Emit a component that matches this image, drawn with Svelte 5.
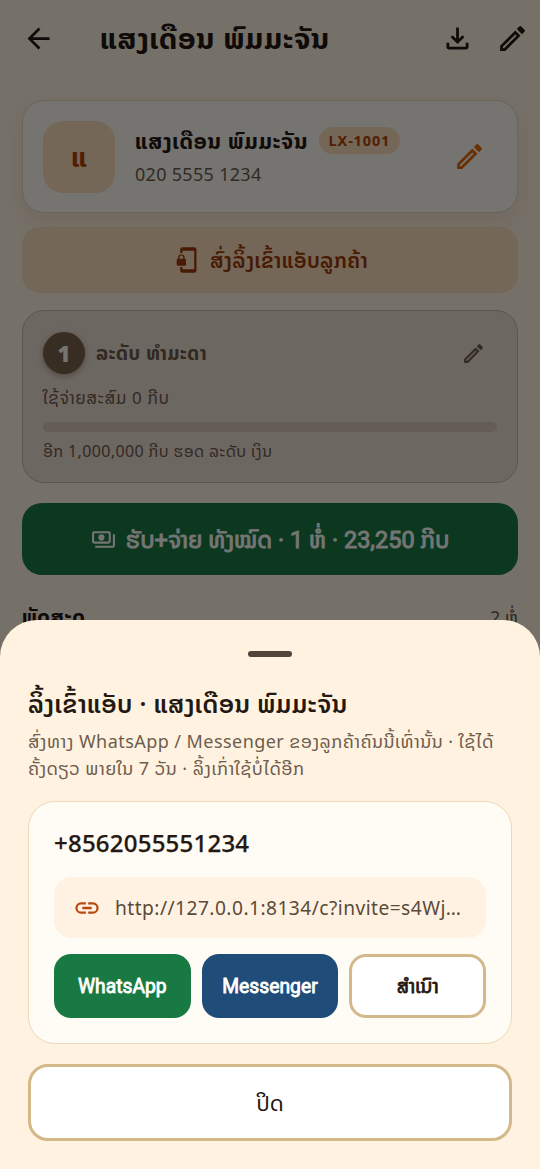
<script lang="ts">
	const customer = { name: 'ແສງເດືອນ ພົມມະຈັນ', initial: 'ແ', code: 'LX-1001', phone: '020 5555 1234' };
	const invite = { phone: '+8562055551234', url: 'http://127.0.0.1:8134/c?invite=s4Wj…' };

	let open = $state(true);
</script>

{#snippet pencil(size: number)}
	<svg width={size} height={size} viewBox="0 0 24 24" fill="currentColor">
		<path
			d="M3 17.25V21h3.75L17.81 9.94l-3.75-3.75L3 17.25zM5.92 19H5v-.92l9.06-9.06.92.92L5.92 19zM20.71 5.63l-2.34-2.34a1 1 0 0 0-1.41 0l-1.83 1.83 3.75 3.75 1.83-1.83a1 1 0 0 0 0-1.41z"
		/>
	</svg>
{/snippet}

<div class="screen">
	<header>
		<button class="icon back" aria-label="ກັບຄືນ">
			<svg width="33" height="33" viewBox="0 0 24 24" fill="currentColor">
				<path d="M20 11H7.83l5.59-5.59L12 4l-8 8 8 8 1.41-1.41L7.83 13H20v-2z" />
			</svg>
		</button>
		<h1>{customer.name}</h1>
		<button class="icon" aria-label="ດາວໂຫຼດ">
			<svg width="33" height="33" viewBox="0 0 24 24" fill="currentColor">
				<path
					d="M12 16l-5-5 1.4-1.45 2.6 2.6V4h2v8.15l2.6-2.6L17 11l-5 5zm-6 4a2 2 0 0 1-2-2v-3h2v3h12v-3h2v3a2 2 0 0 1-2 2H6z"
				/>
			</svg>
		</button>
		<button class="icon edit" aria-label="ແກ້ໄຂ">{@render pencil(33)}</button>
	</header>

	<main>
		<section class="customer">
			<div class="avatar">{customer.initial}</div>
			<div class="who">
				<div class="name-row">
					<span class="name">{customer.name}</span>
					<span class="code">{customer.code}</span>
				</div>
				<div class="phone">{customer.phone}</div>
			</div>
			<button class="icon accent" aria-label="ແກ້ໄຂ">{@render pencil(33)}</button>
		</section>

		<button class="send-link">
			<svg width="28" height="28" viewBox="0 0 24 24" fill="currentColor">
				<path
					d="M19 1H9a2 2 0 0 0-2 2v3h2V4h10v16H9v-2H7v3a2 2 0 0 0 2 2h10a2 2 0 0 0 2-2V3a2 2 0 0 0-2-2zM10.800 11V9.500C10.800 8.100 9.400 7 8 7S5.200 8.100 5.200 9.500V11c-.6 0-1.200.6-1.200 1.200v3.500c0 .7.6 1.300 1.200 1.300h5.500c.7 0 1.300-.6 1.300-1.200v-3.500c0-.7-.6-1.300-1.200-1.300zm-1.300 0h-3V9.500c0-.8.7-1.300 1.500-1.300s1.500.5 1.500 1.300V11z"
				/>
			</svg>
			<span>ສົ່ງລິ້ງເຂົ້າແອັບລູກຄ້າ</span>
		</button>

		<section class="level">
			<div class="level-head">
				<div class="badge">1</div>
				<span class="level-name">ລະດັບ ທຳມະດາ</span>
				<button class="icon" aria-label="ແກ້ໄຂລະດັບ">{@render pencil(25)}</button>
			</div>
			<p class="spent">ໃຊ້ຈ່າຍສະສົມ 0 ກີບ</p>
			<div class="track"></div>
			<p class="remaining">ອີກ 1,000,000 ກີບ ຮອດ ລະດັບ ເງິນ</p>
		</section>

		<button class="pay">
			<svg width="25" height="25" viewBox="0 0 24 24" fill="currentColor">
				<path
					d="M19 14V6a2 2 0 0 0-2-2H3a2 2 0 0 0-2 2v8a2 2 0 0 0 2 2h14a2 2 0 0 0 2-2zm-2 0H3V6h14v8zm-7-7a3 3 0 1 0 0 6 3 3 0 0 0 0-6zm13 0v11a2 2 0 0 1-2 2H4v-2h17V7h2z"
				/>
			</svg>
			<span>ຮັບ+ຈ່າຍ ທັງໝົດ · 1 ຫໍ່ · 23,250 ກີບ</span>
		</button>

		<div class="parcels">
			<strong>ພັດສະດຸ</strong>
			<span>2 ຫໍ່</span>
		</div>
	</main>

	{#if open}
		<div class="scrim"></div>
		<div class="sheet" role="dialog">
			<div class="handle"></div>
			<h2>ລິ້ງເຂົ້າແອັບ · {customer.name}</h2>
			<p class="hint">
				ສົ່ງທາງ WhatsApp / Messenger ຂອງລູກຄ້າຄົນນີ້ເທົ່ານັ້ນ · ໃຊ້ໄດ້<br />
				ຄັ້ງດຽວ ພາຍໃນ 7 ວັນ · ລິ້ງເກົ່າໃຊ້ບໍ່ໄດ້ອີກ
			</p>
			<div class="invite">
				<div class="invite-phone">{invite.phone}</div>
				<div class="url">
					<svg width="28" height="28" viewBox="0 0 24 24" fill="currentColor">
						<path
							d="M3.900 12A3.100 3.100 0 0 1 7 8.900h4V7H7a5 5 0 0 0 0 10h4v-1.900H7A3.100 3.100 0 0 1 3.900 12zM8 13h8v-2H8v2zm9-6h-4v1.900h4a3.100 3.100 0 0 1 0 6.200h-4V17h4a5 5 0 0 0 0-10z"
						/>
					</svg>
					<span>{invite.url}</span>
				</div>
				<div class="actions">
					<button class="whatsapp">WhatsApp</button>
					<button class="messenger">Messenger</button>
					<button class="copy">ສຳເນົາ</button>
				</div>
			</div>
			<button class="close" onclick={() => (open = false)}>ປິດ</button>
		</div>
	{/if}
</div>

<style>
	.screen {
		position: relative;
		width: 540px;
		height: 1169px;
		overflow: hidden;
		background: #fff3e2;
		color: #241812;
		font-family: 'Noto Sans', 'Noto Sans Lao', sans-serif;
	}
	* {
		box-sizing: border-box;
	}
	button {
		border: 0;
		padding: 0;
		font: inherit;
		color: inherit;
		background: none;
		white-space: nowrap;
	}
	svg {
		display: block;
		flex: none;
	}
	h1,
	h2,
	p {
		margin: 0;
		white-space: nowrap;
	}
	header {
		display: flex;
		align-items: center;
		height: 77px;
		padding: 0 11px 0 22px;
	}
	.back {
		margin-right: 45px;
	}
	h1 {
		flex: 1;
		margin-top: -2px;
		font-size: 29px;
		font-weight: 700;
		line-height: 40px;
		letter-spacing: 0.75px;
	}
	.edit {
		margin-left: 22px;
	}
	main {
		padding: 23px 22px 0;
	}
	.customer {
		display: flex;
		align-items: center;
		height: 113px;
		padding: 0 31px 0 20px;
		border: 1px solid #ecd9b8;
		border-radius: 22px;
		background: #fffdf7;
		box-shadow: 0 8px 20px rgba(120, 80, 30, 0.08);
	}
	.avatar {
		width: 72px;
		height: 72px;
		border-radius: 20px;
		background: #ffe0bd;
		color: #b0440a;
		font-size: 27px;
		font-weight: 700;
		line-height: 72px;
		text-align: center;
	}
	.who {
		flex: 1;
		margin-left: 20px;
	}
	.name-row {
		display: flex;
		align-items: center;
		gap: 11px;
		height: 30px;
	}
	.name {
		font-size: 21.5px;
		font-weight: 700;
		line-height: 28px;
		letter-spacing: 0.75px;
		white-space: nowrap;
	}
	.code {
		height: 27px;
		padding: 0 9.5px;
		border-radius: 14px;
		background: #ffe0bd;
		color: #b0440a;
		font-size: 14.5px;
		font-weight: 700;
		line-height: 27px;
		letter-spacing: 0.85px;
	}
	.phone {
		margin-top: 4px;
		color: #6e5d4e;
		font-size: 18px;
		line-height: 28px;
		letter-spacing: 0.3px;
	}
	.accent {
		color: #e2690c;
	}
	.send-link {
		display: flex;
		align-items: center;
		justify-content: center;
		gap: 10px;
		width: 100%;
		height: 66px;
		margin-top: 14px;
		border-radius: 18px;
		background: #ffe0bd;
		color: #9c3c08;
		font-size: 21px;
		font-weight: 600;
		letter-spacing: 0.35px;
	}
	.level {
		height: 173px;
		margin-top: 17px;
		padding: 21px 20px 0;
		border: 1.5px solid #cfb9ac;
		border-radius: 22px;
		background: #ede0d5;
		color: #705a4c;
	}
	.level-head {
		display: flex;
		align-items: center;
		height: 42px;
	}
	.badge {
		width: 42px;
		height: 42px;
		border-radius: 50%;
		background: #7a624c;
		color: #fffdf7;
		font-size: 22px;
		font-weight: 900;
		line-height: 42px;
		text-align: center;
		box-shadow: 0 2px 6px rgba(80, 50, 30, 0.4);
	}
	.level-name {
		flex: 1;
		margin-left: 11px;
		font-size: 19px;
		font-weight: 700;
		letter-spacing: 0.6px;
	}
	.level-head .icon {
		margin-right: 11px;
	}
	.spent {
		margin-top: 12px;
		font-size: 17px;
		line-height: 24px;
		letter-spacing: 0.6px;
	}
	.track {
		height: 10px;
		margin: 12px 0 8px;
		border-radius: 5px;
		background: #dac8bc;
	}
	.remaining {
		font-size: 16px;
		line-height: 22px;
		letter-spacing: 0.37px;
	}
	.pay {
		display: flex;
		align-items: center;
		justify-content: center;
		gap: 10px;
		width: 100%;
		height: 72px;
		margin-top: 20px;
		border-radius: 20px;
		background: #187a42;
		color: #fff;
		font-family: Roboto, 'Noto Sans Lao', sans-serif;
		font-size: 23.5px;
		-webkit-text-stroke: 0.9px currentColor;
	}
	.parcels {
		display: flex;
		align-items: center;
		justify-content: space-between;
		height: 30px;
		margin-top: 27px;
		font-size: 18px;
		white-space: nowrap;
	}
	.parcels strong {
		font-size: 20.5px;
		letter-spacing: 0.5px;
	}
	.parcels span {
		color: #6e5d4e;
	}
	.scrim {
		position: absolute;
		inset: 0;
		background: rgba(0, 0, 0, 0.54);
	}
	.sheet {
		position: absolute;
		left: 0;
		right: 0;
		bottom: 0;
		height: 549px;
		padding: 31px 28px 0;
		border-radius: 37px 37px 0 0;
		background: #fff2e0;
	}
	.handle {
		width: 44px;
		height: 6px;
		margin: 0 auto;
		border-radius: 3px;
		background: #51443a;
	}
	h2 {
		margin-top: 28px;
		font-size: 25px;
		font-weight: 600;
		line-height: 36px;
		letter-spacing: 0.42px;
	}
	.hint {
		margin-top: 7px;
		color: #6e5d4e;
		font-size: 18px;
		line-height: 26.5px;
		letter-spacing: 0.44px;
	}
	.invite {
		height: 243px;
		margin-top: 20px;
		padding: 24px 25px 0;
		border: 1px solid #ecd9b8;
		border-radius: 27px;
		background: #fffcf5;
	}
	.invite-phone {
		font-size: 24px;
		font-weight: 500;
		line-height: 34px;
		letter-spacing: 0.22px;
		-webkit-text-stroke: 0.25px currentColor;
	}
	.url {
		display: flex;
		align-items: center;
		gap: 14px;
		height: 61px;
		margin-top: 17px;
		padding-left: 19px;
		border-radius: 18px;
		background: #fff2e3;
		color: #5a4a3a;
		font-size: 19.2px;
		letter-spacing: 0.45px;
		white-space: nowrap;
	}
	.url svg {
		color: #b8480c;
	}
	.actions {
		display: grid;
		grid-template-columns: repeat(3, 1fr);
		gap: 11px;
		margin-top: 16px;
	}
	.actions button {
		height: 64px;
		border-radius: 17px;
		color: #fff;
		font-family: Roboto, 'Noto Sans Lao', sans-serif;
		font-size: 19.3px;
		-webkit-text-stroke: 0.8px currentColor;
	}
	.actions .whatsapp {
		background: #187a42;
	}
	.actions .messenger {
		background: #1f4c78;
	}
	.actions .copy {
		border: 3px solid #d3b88a;
		background: #fff;
		color: #241812;
	}
	.close {
		width: 100%;
		height: 77px;
		margin-top: 20px;
		border: 3px solid #d3b88a;
		border-radius: 20px;
		background: #fff;
		font-size: 22px;
	}
</style>
